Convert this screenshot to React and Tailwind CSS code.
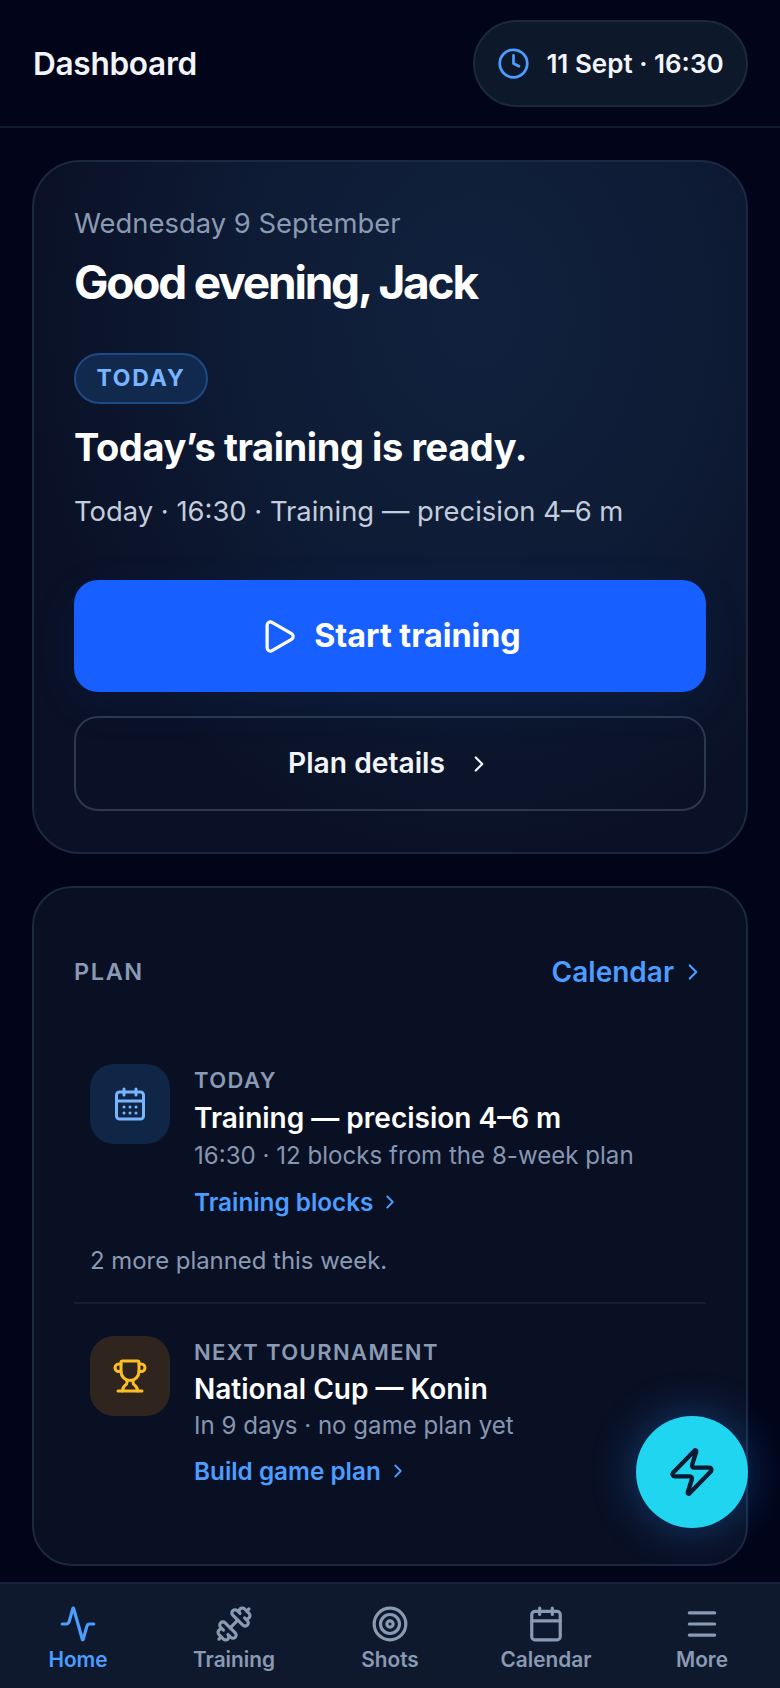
import React from 'react';
import { Activity, Calendar, CalendarDays, ChevronRight, Clock, Dumbbell, Menu, Play, Target, Trophy, Zap } from 'lucide-react';

const tabs = [
    { label: 'Home', icon: Activity, active: true },
    { label: 'Training', icon: Dumbbell },
    { label: 'Shots', icon: Target },
    { label: 'Calendar', icon: Calendar },
    { label: 'More', icon: Menu },
];

const PlanRow = ({ tile, icon: Icon, iconColor, eyebrow, title, detail, link, compact }) => (
    <div className="flex gap-[24px] pl-4">
        <div className={`flex h-20 w-20 shrink-0 items-center justify-center rounded-[24px] ${tile}`}>
            <Icon size={36} strokeWidth={2} className={iconColor} />
        </div>
        <div className="min-w-0">
            <p className="mt-[1px] text-[22px] leading-[30px] font-semibold tracking-[1.4px] text-[#8b9ab3]">{eyebrow}</p>
            <p className={`text-[28px] leading-[38px] font-semibold text-white ${compact ? 'mt-[3px]' : 'mt-[4px]'}`}>{title}</p>
            <p className={`text-[24.1px] leading-[36px] text-[#8796b0] ${compact ? 'mt-0' : 'mt-[1px]'}`}>{detail}</p>
            <a className={`flex items-center gap-[6px] text-[24.3px] leading-[36px] font-semibold text-[#4c9dff] ${compact ? 'mt-[9px]' : 'mt-[10px]'}`}>
                {link} <ChevronRight size={22} strokeWidth={2} />
            </a>
        </div>
    </div>
);

export default function App() {
    return (
        <div className="relative flex h-[1688px] w-[780px] flex-col overflow-hidden bg-[#02051a] font-['Inter',sans-serif]">
            <header className="flex h-[128px] shrink-0 items-start justify-between border-b-2 border-[#101a2e] px-[32px] pt-5">
                <h1 className="mt-[24px] ml-px text-[31.6px] leading-[40px] font-semibold tracking-[-0.3px] text-[#f1f5fb]">Dashboard</h1>
                <div className="flex h-[87px] w-[275px] items-center justify-center gap-[16px] rounded-full border-2 border-[#1b2940] bg-[#0e182b]">
                    <Clock size={33} strokeWidth={2} className="text-[#4c9dff]" />
                    <span className="text-[26px] font-semibold text-[#f1f5fb]">11 Sept · 16:30</span>
                </div>
            </header>

            <main className="flex flex-1 flex-col gap-[32px] px-[32px] pt-[32px]">
                <section className="h-[694px] rounded-[48px] border-2 border-[#1b2940] bg-[radial-gradient(ellipse_at_62%_22%,#11213d_0%,#0e1b35_38%,#0a1126_72%)] px-[40px] pt-[42px]">
                    <p className="text-[27.4px] leading-[38px] text-[#8b9ab3]">Wednesday 9 September</p>
                    <h2 className="mt-[13px] text-[46px] leading-[54px] font-bold tracking-[-2.2px] text-white">Good evening, Jack</h2>
                    <span className="mt-[44px] flex h-[51px] w-[134px] items-center justify-center rounded-full border-2 border-[#1d4a85] bg-[#10294d] text-[23px] font-bold tracking-[1.8px] text-[#79b4ff]">TODAY</span>
                    <h3 className="mt-[18px] text-[38px] leading-[50px] font-bold tracking-[-0.42px] text-white">Today’s training is ready.</h3>
                    <p className="mt-[19px] text-[27.4px] leading-[40px] text-[#c3cddd]">Today · 16:30 · Training — precision 4–6 m</p>
                    <button className="mt-[49px] flex h-[112px] w-full items-center justify-center gap-[16px] rounded-[24px] bg-[#1760ff] text-[32.3px] font-bold text-white shadow-[0_12px_48px_rgba(23,96,255,0.08)]">
                        <Play size={39} strokeWidth={2} /> Start training
                    </button>
                    <button className="mt-[24px] flex h-[95px] w-full items-center justify-center gap-[21px] rounded-[24px] border-2 border-[#2a3850] text-[28.2px] font-semibold text-[#f1f5fb]">
                        Plan details <ChevronRight size={26} strokeWidth={2} />
                    </button>
                </section>

                <section className="h-[680px] rounded-[40px] border-2 border-[#1b2940] bg-[#091024] px-[40px]">
                    <div className="mt-[63px] flex items-center justify-between">
                        <p className="text-[23.5px] font-semibold tracking-[1.6px] text-[#8b9ab3]">PLAN</p>
                        <a className="flex items-center gap-[6px] text-[28px] font-semibold text-[#4c9dff]">
                            Calendar <ChevronRight size={26} strokeWidth={2} />
                        </a>
                    </div>
                    <div className="mt-[71px]">
                        <PlanRow tile="bg-[#0f2647]" icon={CalendarDays} iconColor="text-[#79b4ff]" eyebrow="TODAY" title="Training — precision 4–6 m" detail="16:30 · 12 blocks from the 8-week plan" link="Training blocks" />
                    </div>
                    <p className="mt-[23px] pl-4 text-[23.9px] leading-[36px] text-[#8b9ab3]">2 more planned this week.</p>
                    <div className="mt-[23px] mb-[32px] h-[2px] bg-[#141f33]" />
                    <PlanRow compact tile="bg-[#30241f]" icon={Trophy} iconColor="text-[#fbbf24]" eyebrow="NEXT TOURNAMENT" title="National Cup — Konin" detail="In 9 days · no game plan yet" link="Build game plan" />
                </section>
            </main>

            <nav className="flex h-[106px] shrink-0 border-t-2 border-[#17233a] bg-[#0e192e] pt-[21px]">
                {tabs.map(({ label, icon: Icon, active }) => (
                    <div key={label} className={`flex flex-1 flex-col items-center gap-[2px] ${active ? 'text-[#4c9dff]' : 'text-[#8b9ab3]'}`}>
                        <Icon size={38} strokeWidth={2} />
                        <span className="text-[20.8px] leading-[30px] font-semibold">{label}</span>
                    </div>
                ))}
            </nav>

            {/* quick action button floats over the plan card */}
            <button className="absolute top-[1416px] left-[636px] flex h-[112px] w-[112px] items-center justify-center rounded-full bg-[#1fd5f0] text-[#0b1a33] shadow-[0_0_44px_rgba(34,130,240,0.4)]">
                <Zap size={52} strokeWidth={2} />
            </button>
        </div>
    );
}
